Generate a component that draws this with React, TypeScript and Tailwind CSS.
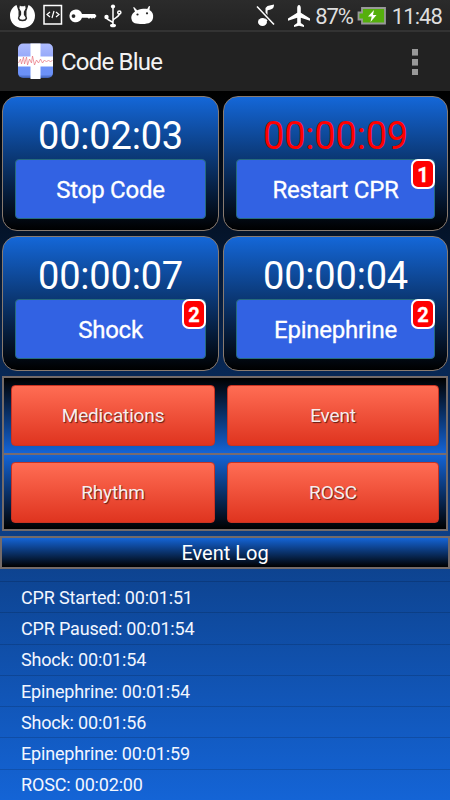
import React from 'react';

interface TimerCardProps {
  time: string;
  label: string;
  count?: number;
  alert?: boolean;
}

const timers: TimerCardProps[] = [
  { time: '00:02:03', label: 'Stop Code' },
  { time: '00:00:09', label: 'Restart CPR', count: 1, alert: true },
  { time: '00:00:07', label: 'Shock', count: 2 },
  { time: '00:00:04', label: 'Epinephrine', count: 2 },
];

const events = [
  'CPR Started: 00:01:51',
  'CPR Paused: 00:01:54',
  'Shock: 00:01:54',
  'Epinephrine: 00:01:54',
  'Shock: 00:01:56',
  'Epinephrine: 00:01:59',
  'ROSC: 00:02:00',
];

const StatusBar: React.FC = () => (
  <div className="flex h-8 shrink-0 items-center border-b-2 border-[#333] bg-linear-to-b/srgb from-[#2b2b2b] to-[#222] pl-[9px] pr-[8px] text-white">
    {/* Notifications */}
    <svg width="27" height="26" viewBox="0 0 27 26" className="mt-[2px] shrink-0">
      <path d="M7.500 2C3.500 4 1 8 1 12.500 1 20 6.500 25 13.500 25S26 20 26 12.500C26 8 23.500 4 19.500 2l-2 6v5.500l-1 4h-6l-1-4V8z" fill="#fff" />
      <path d="M10.500 1l1.500 1.500h3L16.500 1l.8 4.500-1.800 3.500v2.500l2 3.500c-.3 1.500-2 2.500-4 2.500s-3.700-1-4-2.500l2-3.500V9L9.700 5.500z" fill="#fff" stroke="#262626" strokeWidth="1.300" />
    </svg>
    <svg width="20" height="22" viewBox="0 0 20 22" className="ml-[7px] shrink-0" fill="none" stroke="#fff">
      <path d="M1 1.500h17.500v18.500H1z" strokeWidth="1.500" />
      <path d="M7 8l-3 2.500L7 13M13 8l3 2.500-3 2.500M11 7l-2 7" strokeWidth="1.200" />
    </svg>
    <svg width="28" height="14" viewBox="0 0 28 14" className="ml-[6px] mt-px shrink-0" fill="#fff">
      <path fillRule="evenodd" d="M7 .5a6.400 6.400 0 0 1 6 4.400h13L27.500 7l-2 2.500-1.500-.8-1 1-1.700-1-1.300 1-1.500-1H13A6.400 6.400 0 1 1 7 .5zM4.500 5.200a1.900 1.900 0 1 0 0 3.800 1.900 1.900 0 0 0 0-3.800z" />
    </svg>
    <svg width="20" height="24" viewBox="0 0 20 24" className="ml-[6px] mt-px shrink-0" fill="none" stroke="#fff" strokeWidth="1.500">
      <path d="M10 3v19M10 19.500c0-3-6.500-2.500-6.500-6.500M10 17c0-3.500 6.500-3 6.500-8" />
      <circle cx="10" cy="2.500" r="2.100" fill="#fff" stroke="none" />
      <circle cx="16.300" cy="8.500" r="1.600" />
      <circle cx="3.500" cy="13" r="2.200" fill="#fff" stroke="none" />
      <ellipse cx="10" cy="21.500" rx="3" ry="1.800" fill="#fff" stroke="none" />
    </svg>
    <svg width="26" height="20" viewBox="0 0 26 20" className="ml-[7px] mt-px shrink-0">
      <path d="M4 1l3.200 3.300c3.500-1.300 7-1.700 10-1.300L19 0l1 .3-.5 3.700c3 1.500 4 4.500 3.600 7.500-.5 4.500-4 6.500-10.600 6.500S2.300 17.500 1.500 13C.8 10 2.500 7 5 5.500L3.200 1.500z" fill="#fff" />
      <circle cx="7.500" cy="8.500" r="1.100" fill="#222" />
      <circle cx="17" cy="7.300" r="1.100" fill="#222" />
    </svg>

    {/* System state */}
    <div className="ml-auto flex items-center">
      <svg width="20" height="24" viewBox="0 0 20 24" className="mr-[11px] mt-px">
        <path d="M9.500 17V4l2-2 6.500-1.500c0 3-1 5-5.500 5.500l-1 .5v10.500z" fill="#fff" />
        <ellipse cx="6.500" cy="18" rx="4.500" ry="4" fill="#fff" />
        <path d="M1 2.500l17 18" stroke="#262626" strokeWidth="4" />
        <path d="M1 2.500l17 18" stroke="#fff" strokeWidth="1.500" />
      </svg>
      <svg width="24" height="24" viewBox="0 0 24 24" className="mr-[4px] mt-px" fill="#fff">
        <path d="M12 1c1.200 0 1.800 1.500 1.800 3v4.700l9.200 5.800v2.300l-9.200-3v5.200l3.200 2.300V23l-5-1.300L7 23v-1.700L10.200 19v-5.200L1 16.800v-2.300l9.200-5.800V4C10.200 2.500 10.800 1 12 1z" />
      </svg>
      <span className="pt-[3px] text-[22px] leading-none tracking-[-1.1px] text-[#dedede]">87%</span>
      <svg width="29" height="18" viewBox="0 0 29 18" className="ml-[4px] mt-px">
        <path d="M5 1h23v15.500H5v-4H1.500v-7H5z" fill="#55af0d" stroke="#999" strokeWidth="1.800" />
        <path d="M17 3l-6 6.500h3.700L13.500 15l6-7H16z" fill="#fff" />
      </svg>
      <span className="ml-[6px] pt-[3px] text-[22px] leading-none tracking-[-0.9px] text-[#dedede]">11:48</span>
    </div>
  </div>
);

const AppIcon: React.FC = () => (
  <svg width="36" height="37" viewBox="0 0 36 37">
    <defs>
      <linearGradient id="tile" x1="0" y1="0" x2="0" y2="1">
        <stop offset="0" stopColor="#aebcff" />
        <stop offset="0.450" stopColor="#93a6f8" />
        <stop offset="0.550" stopColor="#6f92f6" />
        <stop offset="0.900" stopColor="#6b91f8" />
        <stop offset="1" stopColor="#3c5cae" />
      </linearGradient>
    </defs>
    <rect x="0" y="0.500" width="35" height="34.500" rx="5" fill="url(#tile)" />
    <path d="M12.500 .5h10v35.500h-10zM0 13.500h35v10H0z" fill="#fff" />
    <path d="M.5 20l2-4 1 5 2-7 1 7 2-7 1 8 2-6 2 4 1-7 2 9 2-5 2 3 2-4 2 4 2-3 2 2 2-2 2 2 2-2" fill="none" stroke="#e8747e" strokeWidth="0.700" />
  </svg>
);

const TimerCard: React.FC<TimerCardProps> = ({ time, label, count, alert }) => (
  <div className="flex h-[135px] flex-col rounded-[15px] border border-[#897b70] bg-linear-to-b/srgb from-[#1467d8] to-black px-[12px] pt-[17px]">
    <div className={`h-[45px] text-center text-[38px] leading-[45px] tracking-[-0.2px] ${alert ? 'text-[#ff0000]' : 'text-white'}`}>
      {time}
    </div>
    <button className="relative h-[60px] w-full rounded-[4px] border border-[#266b7c] bg-[#3262e3] pt-[2px] text-[24px] leading-none tracking-[-0.25px] text-white [-webkit-text-stroke:0.3px_white]">
      {label}
      {count && (
        <span className="absolute -right-px -top-px flex h-[30px] w-[24.500px] items-center justify-center rounded-[7px] border-[2.500px] border-white bg-[#ff0000] pt-px text-[20px] font-bold leading-none">
          {count}
        </span>
      )}
    </button>
  </div>
);

const ActionButton: React.FC<{ label: string }> = ({ label }) => (
  <button className="h-[61px] rounded-[4px] border border-[#c83322] bg-linear-to-b/srgb from-[#ff6d54] to-[#df341f] text-[19px] leading-none tracking-[-0.15px] text-[#f7eeee] [text-shadow:1px_1px_1px_#00000099]">
    {label}
  </button>
);

const App: React.FC = () => {
  return (
    <div className="flex h-[800px] w-[450px] flex-col overflow-hidden bg-black font-['Roboto',sans-serif]">
      <StatusBar />

      {/* Action bar */}
      <header className="flex h-[59px] shrink-0 items-center bg-[#222222] pl-[18px] pr-[32px]">
        <AppIcon />
        <h1 className="ml-[7px] pt-px text-[24px] leading-none tracking-[-0.8px] text-[#f3f3f3]">Code Blue</h1>
        <div className="ml-auto flex flex-col gap-[3px]">
          <span className="h-[7px] w-[6px] border-b border-[#666] bg-[#999]" />
          <span className="h-[7px] w-[6px] border-b border-[#666] bg-[#999]" />
          <span className="h-[6px] w-[6px] bg-[#999]" />
        </div>
      </header>

      <main className="flex flex-1 flex-col bg-linear-to-b/srgb from-black to-[#1464d6] pt-[5px]">
        {/* Timers */}
        <div className="grid shrink-0 grid-cols-[217px_225px] gap-x-[4px] gap-y-[5px] px-[2px]">
          {timers.map((timer) => (
            <TimerCard key={timer.label} {...timer} />
          ))}
        </div>

        {/* Actions */}
        <div className="mx-[2px] mt-[5px] h-[155px] shrink-0 border-2 border-[#746b69]">
          <div className="grid h-[77px] grid-cols-[204px_212px] gap-x-[12px] border-b-2 border-[#776b70] bg-linear-to-b/srgb from-black to-[#1464d6] pl-[7px] pt-[7px]">
            <ActionButton label="Medications" />
            <ActionButton label="Event" />
          </div>
          <div className="grid h-[74px] grid-cols-[204px_212px] gap-x-[12px] bg-linear-to-b/srgb from-[#1464d6] to-black pl-[7px] pt-[7px]">
            <ActionButton label="Rhythm" />
            <ActionButton label="ROSC" />
          </div>
        </div>

        {/* Event log */}
        <h2 className="mt-[5px] flex h-[33px] shrink-0 items-center justify-center border-2 border-[#746b69] bg-linear-to-b/srgb from-[#1464d6] to-black pt-px text-[20px] leading-none text-white">
          Event Log
        </h2>
        <ul className="mt-[12px]">
          {events.map((event, index) => (
            <li
              key={index}
              className="flex h-[31.300px] items-center border-t border-[#00000026] pl-[21px] pt-px text-[18px] leading-none tracking-[-0.17px] text-[#f2f6ff]"
            >
              {event}
            </li>
          ))}
        </ul>
      </main>
    </div>
  );
};

export default App;
